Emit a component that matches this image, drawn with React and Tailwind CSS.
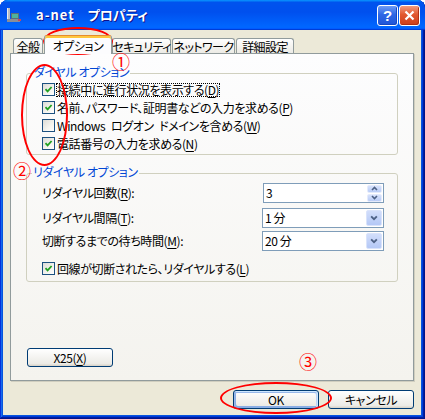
import React from 'react';

const font = "font-['Noto_Sans_CJK_JP','Noto_Sans',sans-serif] [font-feature-settings:'palt']";

function Mn({ children }) {
  return <span className="underline underline-offset-[2px] decoration-1">{children}</span>;
}

function CheckBox({ checked }) {
  return (
    <span className="w-[13px] h-[13px] shrink-0 border border-[#1C5180] bg-[linear-gradient(135deg,#DCDCD7,#F5F4EF_60%,#FFFFFF)] flex items-center justify-center">
      {checked && (
        <svg width="9" height="9" viewBox="0 0 9 9">
          <path d="M1.5 4.2 L3.6 6.4 L7.6 2" stroke="#21A121" strokeWidth="1.8" fill="none" />
        </svg>
      )}
    </span>
  );
}

function Chevron({ up = false, size = 7 }) {
  return (
    <svg width={size} height={size - 2} viewBox="0 0 7 5">
      <path d={up ? 'M1 4 L3.5 1.5 L6 4' : 'M1 1 L3.5 3.5 L6 1'} stroke="#4D6185" strokeWidth="1.6" fill="none" />
    </svg>
  );
}

function Spinner({ value }) {
  return (
    <div className="w-[121px] h-[20px] border border-[#7F9DB9] bg-white flex items-center pr-[1px]">
      <span className="pl-[2px] flex-1 leading-[14px]">{value}</span>
      <div className="w-[15px] h-[17px] flex flex-col gap-[1px]">
        <div className="flex-1 rounded-[2px] bg-[linear-gradient(180deg,#D6E1FB,#B9CCF6)] border border-[#E4EBFC] flex items-center justify-center">
          <Chevron up />
        </div>
        <div className="flex-1 rounded-[2px] bg-[linear-gradient(180deg,#D6E1FB,#B9CCF6)] border border-[#E4EBFC] flex items-center justify-center">
          <Chevron />
        </div>
      </div>
    </div>
  );
}

function Combo({ value }) {
  return (
    <div className="w-[122px] h-[20px] border border-[#7F9DB9] bg-white flex items-center pr-[1px]">
      <span className="pl-[2px] flex-1 leading-[14px]">{value}</span>
      <div className="w-[16px] h-[16px] rounded-[2px] bg-[linear-gradient(180deg,#D2DEFB,#B4C8F6)] border border-[#D9E3FB] flex items-center justify-center">
        <Chevron size={8} />
      </div>
    </div>
  );
}

function XpButton({ children, isDefault = false }) {
  return (
    <div
      className={`w-[86px] h-[19px] flex items-center justify-center rounded-[3px] border border-[#003C74] bg-[linear-gradient(180deg,#FFFFFF,#ECEBE6_86%,#D6D0C5)] leading-[14px] ${
        isDefault
          ? 'shadow-[inset_-1px_1px_#CEE7FF,inset_1px_2px_#98B8EA,inset_-2px_2px_#BCD4F6,inset_1px_-1px_#89ADE4,inset_2px_-2px_#89ADE4]'
          : ''
      }`}
    >
      {children}
    </div>
  );
}

function Tab({ label, selected = false, w, ml }) {
  if (selected) {
    return (
      <div
        className={`${w} ${ml} relative z-10 h-[19px] -mb-px rounded-t-[3px] border border-b-0 border-[#919B9C] border-t-[#E68B2C] bg-[#FCFCFE] shadow-[inset_0_2px_0_#FFC73C] flex items-center justify-center whitespace-nowrap leading-[14px] pt-[1px]`}
      >
        {label}
      </div>
    );
  }
  return (
    <div
      className={`${w} ${ml} h-[15px] rounded-t-[3px] border border-b-0 border-[#919B9C] bg-[linear-gradient(180deg,#FFFFFF,#F3F2EE_60%,#ECEBE6)] flex items-center justify-center whitespace-nowrap tracking-[-0.6px] leading-[14px] pt-[1px]`}
    >
      {label}
    </div>
  );
}

function NetIcon() {
  return (
    <svg width="16" height="16" viewBox="0 0 16 16">
      <rect x="1" y="1" width="3" height="13" fill="#B8BCC4" />
      <rect x="1" y="1" width="1" height="13" fill="#E8ECF0" />
      <rect x="1" y="12" width="13" height="3" fill="#8A8E98" />
      <rect x="5" y="6" width="8" height="6" fill="#5D6C7A" />
      <rect x="6" y="7" width="6" height="4" fill="#4FB39A" />
      <rect x="12" y="12" width="3" height="2" fill="#C24A5A" />
    </svg>
  );
}

function App() {
  return (
    <div className={`${font} text-[12px] tracking-[-0.4px] text-black bg-white w-[425px] h-[419px]`}>
      <div className="relative w-[425px] h-[419px] flex flex-col rounded-t-[8px] overflow-hidden bg-[#0855DD] shadow-[inset_-1px_-1px_#00138C,inset_1px_1px_#0831D9,inset_-2px_-2px_#001EA0,inset_2px_2px_#166AEE,inset_-3px_-3px_#003BDA,inset_3px_3px_#0855DD]">
        {/* title bar */}
        <div className="h-[30px] shrink-0 flex items-center pl-[6px] pr-[5px] bg-[linear-gradient(180deg,#0997FF,#0053EE_8%,#0050EE_40%,#0066FF_88%,#0066FF_93%,#005BFF_95%,#003DD7_96%,#003DD7)]">
          <NetIcon />
          <span className="ml-[14px] text-white font-bold text-[13px] tracking-[1px] [text-shadow:1px_1px_#0F1089]">a-net</span>
          <span className="ml-[13px] text-white font-bold text-[13px] tracking-normal [text-shadow:1px_1px_#0F1089]">プロパティ</span>
          <div className="ml-auto flex gap-[1px]">
            <div className="w-[21px] h-[21px] rounded-[3px] border border-white bg-[linear-gradient(180deg,#6D9BF5,#2E67E5_45%,#1F55D8)] shadow-[inset_-1px_-1px_#1848C0] flex items-center justify-center text-white font-bold text-[15px] leading-none font-['Liberation_Sans',sans-serif]">
              ?
            </div>
            <div className="w-[21px] h-[21px] rounded-[3px] border border-white bg-[linear-gradient(180deg,#F09A7E,#E2582F_45%,#CC3E1C)] shadow-[inset_-1px_-1px_#B23114] flex items-center justify-center">
              <svg width="11" height="11" viewBox="0 0 11 11">
                <path d="M1.5 1.5 L9.5 9.5 M9.5 1.5 L1.5 9.5" stroke="#FFFFFF" strokeWidth="2.2" />
              </svg>
            </div>
          </div>
        </div>

        {/* body */}
        <div className="flex-1 ml-[3px] mr-[4px] mb-[4px] bg-[#ECE9D8] flex flex-col">
          {/* tabs */}
          <div className="h-[23px] shrink-0 flex items-end pl-[10px]">
            <Tab label="全般" w="w-[30px]" ml="ml-0" />
            <Tab label="オプション" w="w-[68px]" ml="ml-[1px]" selected />
            <Tab label="セキュリティ" w="w-[59px]" ml="ml-0" />
            <Tab label="ネットワーク" w="w-[63px]" ml="ml-[1px]" />
            <Tab label="詳細設定" w="w-[58px]" ml="ml-[1px]" />
          </div>

          {/* panel */}
          <div className="ml-[7px] w-[404px] h-[328px] shrink-0 border border-[#919B9C] shadow-[1px_1px_0_#D0CEBF] bg-[linear-gradient(180deg,#FDFDFE,#F4F3EE)] flex flex-col px-[15px] pb-[13px]">
            <fieldset className="mt-[11px] border border-[#D0D0BF] rounded-[3px]">
              <legend className="ml-[6px] px-[1px] pb-[3px] leading-[14px] text-[#0046D5]">ダイヤル オプション</legend>
              <div className="pl-[15px] pt-[1px] pb-[4px] flex flex-col gap-[5px]">
                <div className="h-[13px] flex items-center gap-[2px]">
                  <CheckBox checked />
                  <span className="leading-[12px] outline outline-1 outline-dotted outline-black">
                    接続中に進行状況を表示する(<Mn>D</Mn>)
                  </span>
                </div>
                <div className="h-[13px] flex items-center gap-[2px]">
                  <CheckBox checked />
                  <span className="leading-[14px]">名前、パスワード、証明書などの入力を求める(<Mn>P</Mn>)</span>
                </div>
                <div className="h-[13px] flex items-center gap-[2px]">
                  <CheckBox />
                  <span className="leading-[14px]">Windows{'\u2002'}ログオン{'\u2002'}ドメインを含める(<Mn>W</Mn>)</span>
                </div>
                <div className="h-[13px] flex items-center gap-[2px]">
                  <CheckBox checked />
                  <span className="leading-[14px]">電話番号の入力を求める(<Mn>N</Mn>)</span>
                </div>
              </div>
            </fieldset>

            <fieldset className="mt-[10px] border border-[#D0D0BF] rounded-[3px]">
              <legend className="ml-[5px] px-[1px] pb-[3px] leading-[14px] text-[#0046D5]">リダイヤル オプション</legend>
              <div className="pl-[15px] pr-[13px] pt-[1px] pb-[6px] flex flex-col">
                <div className="h-[20px] flex items-center justify-between">
                  <span className="leading-[14px]">リダイヤル回数(<Mn>R</Mn>):</span>
                  <Spinner value="3" />
                </div>
                <div className="mt-[5px] h-[20px] flex items-center justify-between">
                  <span className="leading-[14px]">リダイヤル間隔(<Mn>T</Mn>):</span>
                  <Combo value="1 分" />
                </div>
                <div className="mt-[3px] h-[20px] flex items-center justify-between">
                  <span className="leading-[14px]">切断するまでの待ち時間(<Mn>M</Mn>):</span>
                  <Combo value="20 分" />
                </div>
                <div className="mt-[11px] h-[13px] flex items-center gap-[2px]">
                  <CheckBox checked />
                  <span className="leading-[14px]">回線が切断されたら、リダイヤルする(<Mn>L</Mn>)</span>
                </div>
              </div>
            </fieldset>

            <div className="mt-auto ml-[1px]">
              <XpButton>
                X25(<Mn>X</Mn>)
              </XpButton>
            </div>
          </div>

          {/* dialog buttons */}
          <div className="mt-[9px] flex justify-end gap-[9px] pr-[7px]">
            <XpButton isDefault>OK</XpButton>
            <XpButton>キャンセル</XpButton>
          </div>
        </div>

        {/* red annotations */}
        <div className="absolute left-[43px] top-[27px] w-[70px] h-[28px] rounded-[50%] border-2 border-[#FF0000]" />
        <div className="absolute left-[21px] top-[64px] w-[47px] h-[102px] rounded-[50%] border-2 border-[#FF0000]" />
        <div className="absolute left-[220px] top-[382px] w-[112px] h-[32px] rounded-[50%] border-2 border-[#FF0000]" />
        <span className="absolute left-[112px] top-[52px] text-[18px] leading-none tracking-normal text-[#FF0000]">①</span>
        <span className="absolute left-[13px] top-[161px] text-[18px] leading-none tracking-normal text-[#FF0000]">②</span>
        <span className="absolute left-[299px] top-[352px] text-[18px] leading-none tracking-normal text-[#FF0000]">③</span>
      </div>
    </div>
  );
}

export default App;
